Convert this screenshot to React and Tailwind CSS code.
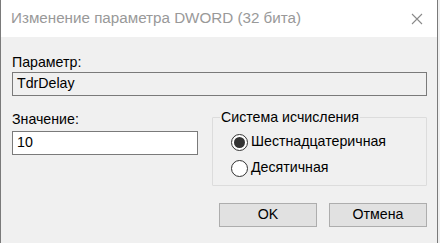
import React from 'react';

function Radio({ checked, label }) {
    return (
        <label className="flex items-center h-[26px]">
            <span className="w-[17px] h-[17px] rounded-full border border-[#333333] bg-white flex items-center justify-center">
                {checked && <span className="w-[11px] h-[11px] rounded-full bg-[#333333]"></span>}
            </span>
            <span className="ml-[3px]">{label}</span>
        </label>
    );
}

export default function App() {
    return (
        <div className="w-[440px] h-[243px] flex bg-[#f0f0f0] font-['Liberation_Sans',Arial,sans-serif] text-[14.2px] text-black">
            <div className="w-[438px] h-full border-l border-r border-[#7a7a7a] flex flex-col bg-[#f0f0f0]">
                {/* заголовок */}
                <div className="h-[37px] bg-white flex items-center justify-between pl-[10px] pr-[12px] shrink-0">
                    <span className="text-[15.2px] text-[#999999]">Изменение параметра DWORD (32 бита)</span>
                    <svg width="12" height="12" viewBox="0 0 12 12" className="mr-[2px]">
                        <path d="M1 1 L11 11 M11 1 L1 11" stroke="#8a8a8a" strokeWidth="1.1" fill="none" />
                    </svg>
                </div>

                <div className="flex flex-col pl-[11px] pr-[10px] pt-[16px]">
                    <div className="leading-[18px]">Параметр:</div>
                    <div className="mt-[1px] h-[24px] w-[415px] border border-[#7a7a7a] bg-[#f0f0f0] flex items-center pl-[4px]">
                        TdrDelay
                    </div>

                    <div className="flex mt-[14px]">
                        <div className="w-[186px] flex flex-col">
                            <div className="leading-[18px]">Значение:</div>
                            <div className="mt-[3px] h-[24px] w-[186px] border border-[#7a7a7a] bg-white flex items-center pl-[4px]">
                                10
                            </div>
                        </div>
                        <div className="ml-[14px] relative w-[216px] h-[69px] mt-[7px] border border-[#dcdcdc] rounded-[1px]">
                            <span className="absolute left-[7px] top-[-10px] px-[1px] bg-[#f0f0f0] leading-[18px]">Система исчисления</span>
                            <div className="flex flex-col pl-[18px] pt-[11px]">
                                <Radio checked label="Шестнадцатеричная" />
                                <Radio label="Десятичная" />
                            </div>
                        </div>
                    </div>

                    <div className="flex justify-end gap-[12px] mt-[17px] pr-[0px]">
                        <button className="w-[98px] h-[24px] bg-[#e1e1e1] border border-[#adadad]">OK</button>
                        <button className="w-[98px] h-[24px] bg-[#e1e1e1] border border-[#adadad]">Отмена</button>
                    </div>
                </div>
            </div>
        </div>
    );
}
